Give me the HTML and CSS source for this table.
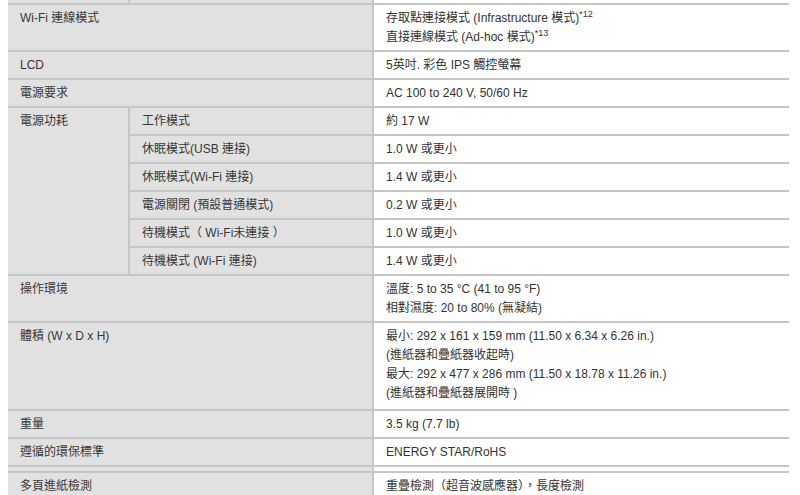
FILE: index.html
```html
<!DOCTYPE html>
<html lang="zh-Hant">
<head>
<meta charset="utf-8">
<title>規格</title>
<link rel="stylesheet" href="styles.css">
</head>
<body>
<div class="wrap">
<table class="spec">
  <colgroup>
    <col class="c1"><col class="c2"><col class="c3">
  </colgroup>
  <tr class="stub"><td class="k edge"></td><td class="k"></td><td class="v"></td></tr>
  <tr><td class="k edge" colspan="2">Wi-Fi 連線模式</td><td class="v">存取點連接模式 (Infrastructure 模式)<sup>*12</sup><br>直接連線模式 (Ad-hoc 模式)<sup>*13</sup></td></tr>
  <tr><td class="k edge" colspan="2">LCD</td><td class="v">5英吋. 彩色 IPS 觸控螢幕</td></tr>
  <tr><td class="k edge" colspan="2">電源要求</td><td class="v">AC 100 to 240 V, 50/60 Hz</td></tr>
  <tr><td class="k edge" rowspan="6">電源功耗</td><td class="k">工作模式</td><td class="v">約 17 W</td></tr>
  <tr><td class="k">休眠模式(USB 連接)</td><td class="v">1.0 W 或更小</td></tr>
  <tr><td class="k">休眠模式(Wi-Fi 連接)</td><td class="v">1.4 W 或更小</td></tr>
  <tr><td class="k">電源關閉 (預設普通模式)</td><td class="v">0.2 W 或更小</td></tr>
  <tr><td class="k">待機模式（ Wi-Fi未連接 ）</td><td class="v">1.0 W 或更小</td></tr>
  <tr><td class="k">待機模式 (Wi-Fi 連接)</td><td class="v">1.4 W 或更小</td></tr>
  <tr><td class="k edge" colspan="2">操作環境</td><td class="v">溫度: 5 to 35 °C (41 to 95 °F)<br>相對濕度: 20 to 80% (無凝結)</td></tr>
  <tr><td class="k edge tall" colspan="2">體積 (W x D x H)</td><td class="v tall">最小: 292 x 161 x 159 mm (11.50 x 6.34 x 6.26 in.)<br>(進紙器和疊紙器收起時)<br>最大: 292 x 477 x 286 mm (11.50 x 18.78 x 11.26 in.)<br>(進紙器和疊紙器展開時 )</td></tr>
  <tr><td class="k edge" colspan="2">重量</td><td class="v">3.5 kg (7.7 lb)</td></tr>
  <tr><td class="k edge" colspan="2">遵循的環保標準</td><td class="v">ENERGY STAR/RoHS</td></tr>
  <tr class="gap"><td class="k edge" colspan="2"></td><td class="v"></td></tr>
  <tr><td class="k edge" colspan="2">多頁進紙檢測</td><td class="v">重疊檢測（超音波感應器），長度檢測</td></tr>
</table>
</div>
</body>
</html>
```

FILE: styles.css
```css
html, body {
  margin: 0;
  padding: 0;
  background: #ffffff;
  overflow: hidden;
}
.wrap {
  padding: 0 11px 0 8px;
}
.spec {
  width: 781px;
  border-collapse: collapse;
  table-layout: fixed;
  font-family: "Liberation Sans", Arial, "Noto Sans CJK TC", sans-serif;
  font-size: 12px;
  line-height: 19px;
  color: #383838;
}
.c1 { width: 121px; }
.c2 { width: 244px; }
.c3 { width: 416px; }
.spec td {
  padding: 4px 12px 3px 12px;
  vertical-align: top;
  border-bottom: 2px solid #c6c6c6;
  border-top: 2px solid #c6c6c6;
  border-left: 2px solid #c6c6c6;
}
.spec td.edge {
  border-left: none;
}
.spec .k {
  background: #e1e1e1;
}
.spec .v {
  background: #ffffff;
  color: #333333;
}
.spec .tall {
  padding-bottom: 6px;
}
.stub td {
  height: 3px;
  padding: 0;
  border-top: none;
}
.gap td {
  height: 4px;
  padding: 0;
}
.spec sup {
  font-size: 9px;
  line-height: 0;
  vertical-align: 5px;
}
```
